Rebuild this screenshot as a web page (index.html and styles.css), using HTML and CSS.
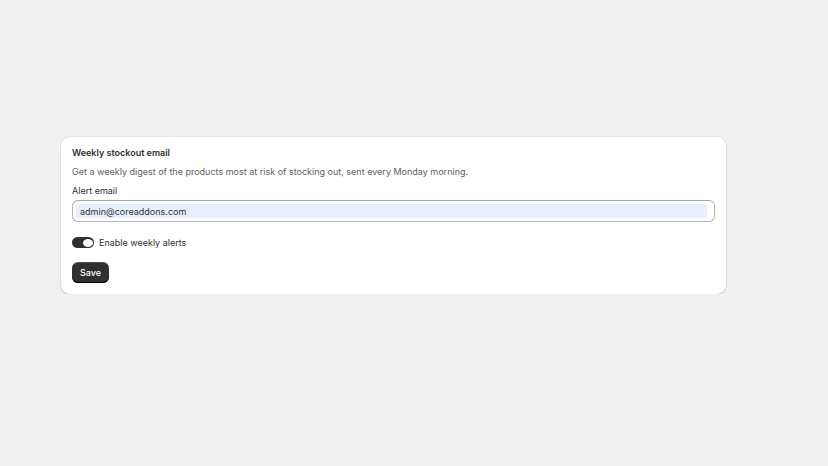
FILE: index.html
```html
<!DOCTYPE html>
<html lang="en">
<head>
  <meta charset="UTF-8">
  <title>Weekly stockout email</title>
  <link rel="stylesheet" href="styles.css">
</head>
<body>

  <div class="page">
    <section class="card">
      <h2 class="cardTitle">Weekly stockout email</h2>
      <p class="cardText">Get a weekly digest of the products most at risk of stocking out, sent every Monday morning.</p>

      <label class="fieldLabel" for="alertEmail">Alert email</label>
      <div class="inputWrap">
        <input id="alertEmail" class="textInput" type="email" value="admin@coreaddons.com">
      </div>

      <label class="toggleRow">
        <span class="toggle on"><span class="knob"></span></span>
        <span>Enable weekly alerts</span>
      </label>

      <button class="saveBtn">Save</button>
    </section>
  </div>

</body>
</html>
```

FILE: styles.css
```css
body {
  margin: 0;
  padding: 0;
  background: #f1f1f1;
  font-family: Inter, "Noto Sans", sans-serif;
  font-size: 9px;
  line-height: 15px;
  color: #303030;
}
.page {
  padding: 137px 102px 0 61px;
}
.card {
  background: #fff;
  border-radius: 9px;
  padding: 8px 11px 11px;
  box-shadow: 0 1px 2px rgba(0,0,0,0.18), 0 0 0 1px rgba(0,0,0,0.03);
  display: flex;
  flex-direction: column;
  align-items: flex-start;
}
.cardTitle {
  margin: 0;
  font-size: 9px;
  font-weight: 600;
  line-height: 15px;
}
.cardText {
  margin: 4px 0 0;
  color: #616161;
}
.fieldLabel {
  margin-top: 4px;
}
.inputWrap {
  margin-top: 2px;
  align-self: stretch;
  box-sizing: border-box;
  height: 22px;
  border: 1px solid #b4b4b4;
  border-top-color: #a6a6a6;
  border-radius: 6px;
  padding: 3px 7px 3px 3px;
  display: flex;
}
.textInput {
  flex: 1;
  border: 0;
  outline: 0;
  margin: 0;
  padding: 0 4px;
  font: inherit;
  color: #303030;
  background: #e9f0fd;
}
.toggleRow {
  margin-top: 13px;
  display: flex;
  align-items: center;
  gap: 5px;
}
.toggle {
  width: 22px;
  height: 11px;
  border-radius: 6px;
  background: #303030;
  position: relative;
}
.toggle .knob {
  position: absolute;
  top: 1.5px;
  right: 1.5px;
  width: 10px;
  height: 8px;
  border-radius: 5px / 4px;
  background: #fff;
}
.saveBtn {
  margin-top: 12px;
  height: 21px;
  padding: 0 8px;
  border: 0;
  border-radius: 6px;
  background: #303030;
  color: #fff;
  font: inherit;
  font-weight: 500;
  box-shadow: inset 0 -1px 0 #000, inset 0 1px 0 rgba(255,255,255,0.15);
  cursor: pointer;
}
```
